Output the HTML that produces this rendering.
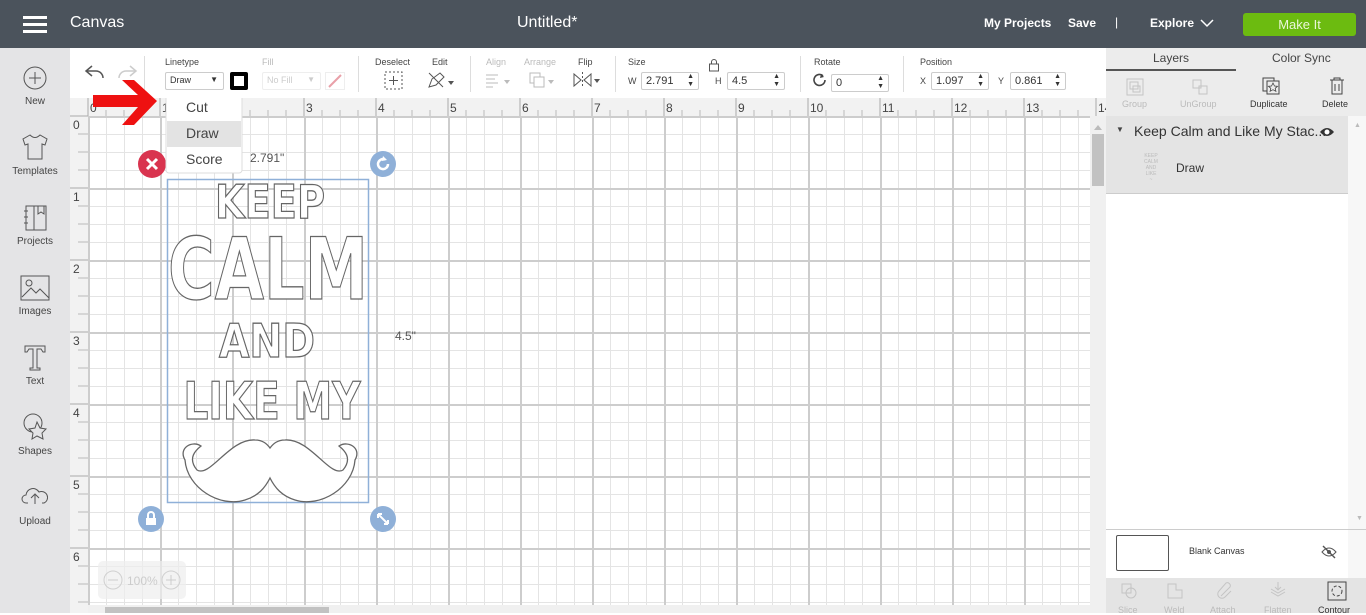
<!DOCTYPE html>
<html><head><meta charset="utf-8">
<style>
*{box-sizing:border-box;margin:0;padding:0}
body{width:1366px;height:613px;overflow:hidden;font-family:"Liberation Sans",sans-serif;background:#fff;position:relative;color:#333}
.abs{position:absolute}
#top{left:0;top:0;width:1366px;height:48px;background:#4b535c;color:#fff}
#side{left:0;top:48px;width:70px;height:565px;background:#e4e4e6}
.si{position:absolute;left:0;width:70px;text-align:center;font-size:10px;color:#444}
#tb{left:70px;top:48px;width:1036px;height:50px;background:#fff}
.lbl{position:absolute;font-size:9px;color:#444}
.dis{color:#bbb}
.inp{position:absolute;height:18px;border:1px solid #ccc;border-radius:2px;font-size:11px;padding:2px 4px;color:#333;background:#fff}
.sep{position:absolute;top:8px;width:1px;height:36px;background:#ddd}
#grid{left:70px;top:98px;width:1036px;height:515px;background:#fff;overflow:hidden}
#rp{left:1106px;top:48px;width:260px;height:565px;background:#fff}
</style></head><body>

<div id="top" class="abs">
  <div class="abs" style="left:23px;top:16px;width:24px;height:3px;background:#fff"></div>
  <div class="abs" style="left:23px;top:23px;width:24px;height:3px;background:#fff"></div>
  <div class="abs" style="left:23px;top:30px;width:24px;height:3px;background:#fff"></div>
  <div class="abs" style="left:70px;top:14px;font-size:16px">Canvas</div>
  <div class="abs" style="left:517px;top:14px;font-size:16px">Untitled*</div>
  <div class="abs" style="left:984px;top:16px;font-size:12px;font-weight:bold">My Projects</div>
  <div class="abs" style="left:1068px;top:16px;font-size:12px;font-weight:bold">Save</div>
  <div class="abs" style="left:1115px;top:15px;font-size:12px">|</div>
  <div class="abs" style="left:1150px;top:16px;font-size:12px;font-weight:bold">Explore</div>
  <svg class="abs" style="left:1200px;top:18px" width="14" height="10"><path d="M1 2l6 6 6-6" stroke="#fff" stroke-width="1.5" fill="none"/></svg>
  <div class="abs" style="left:1243px;top:13px;width:113px;height:23px;background:#6cbb10;border-radius:3px;text-align:center;line-height:23px;font-size:13px;color:#eaf6d8">Make It</div>
</div>

<div id="side" class="abs">
  <svg class="abs" style="left:23px;top:18px" width="24" height="24"><circle cx="12" cy="12" r="11" stroke="#555" fill="none"/><path d="M12 6v12M6 12h12" stroke="#555"/></svg>
  <div class="si" style="top:48px">New</div>
  <svg class="abs" style="left:20px;top:85px" width="30" height="28"><path d="M10 2 L3 6 L5 12 L8 11 L8 26 L22 26 L22 11 L25 12 L27 6 L20 2 Q15 7 10 2Z" stroke="#555" fill="none"/></svg>
  <div class="si" style="top:118px">Templates</div>
  <svg class="abs" style="left:24px;top:156px" width="24" height="28"><rect x="2" y="2" width="20" height="24" stroke="#555" fill="none"/><path d="M10 2v24M14 2v8l3-2 3 2V2M0 7h4M0 13h4M0 19h4" stroke="#555" fill="none"/></svg>
  <div class="si" style="top:188px">Projects</div>
  <svg class="abs" style="left:20px;top:227px" width="30" height="26"><rect x="1" y="1" width="28" height="24" stroke="#555" fill="none"/><circle cx="9" cy="8" r="3" stroke="#555" fill="none"/><path d="M2 22l9-9 5 5 4-4 9 9" stroke="#555" fill="none"/></svg>
  <div class="si" style="top:258px">Images</div>
  <svg class="abs" style="left:23px;top:296px" width="24" height="28"><path d="M2 2h20v6h-2l-2-3h-4v19h3v2H7v-2h3V5H6L4 8H2Z" stroke="#555" fill="none"/></svg>
  <div class="si" style="top:328px">Text</div>
  <svg class="abs" style="left:22px;top:364px" width="26" height="28"><circle cx="11" cy="11" r="9" stroke="#555" fill="none"/><path d="M15 10l3 6 6 1-4 4 1 6-6-3-5 3 1-6-4-4 6-1Z" stroke="#555" fill="#e4e4e6"/></svg>
  <div class="si" style="top:398px">Shapes</div>
  <svg class="abs" style="left:21px;top:436px" width="28" height="22"><path d="M7 19H5a4 4 0 0 1 0-8 7 7 0 0 1 13-3 5 5 0 0 1 5 11h-2" stroke="#555" fill="none"/><path d="M14 20v-9M10 14l4-4 4 4" stroke="#555" fill="none"/></svg>
  <div class="si" style="top:468px">Upload</div>
</div>

<div id="tb" class="abs">
  <svg class="abs" style="left:14px;top:16px" width="22" height="16"><path d="M8 2L2 7l6 5M2 7h10a7 7 0 0 1 7 7" stroke="#555" stroke-width="1.5" fill="none"/></svg>
  <svg class="abs" style="left:46px;top:16px" width="22" height="16"><path d="M14 2l6 5-6 5M20 7H10a7 7 0 0 0-7 7" stroke="#ccc" stroke-width="1.5" fill="none"/></svg>
  <div class="sep" style="left:74px"></div>
  <div class="lbl" style="left:95px;top:9px">Linetype</div>
  <div class="inp" style="left:95px;top:24px;width:59px;font-size:9px">Draw<span style="position:absolute;right:5px;font-size:8px">▼</span></div>
  <div class="abs" style="left:160px;top:24px;width:18px;height:18px;background:#000;border-radius:2px"><div style="margin:4px;width:10px;height:10px;background:#fff"></div></div>
  <div class="lbl dis" style="left:192px;top:9px">Fill</div>
  <div class="inp" style="left:192px;top:24px;width:59px;font-size:9px;color:#ccc;border-color:#eee">No Fill<span style="position:absolute;right:5px;font-size:8px">▼</span></div>
  <div class="abs" style="left:255px;top:24px;width:20px;height:18px;border:1px solid #eee"><svg width="18" height="16"><path d="M3 14L15 2" stroke="#e9a0a8" stroke-width="2"/></svg></div>
  <div class="sep" style="left:288px"></div>
  <div class="lbl" style="left:305px;top:9px">Deselect</div>
  <svg class="abs" style="left:314px;top:23px" width="20" height="20"><rect x="1" y="1" width="17" height="17" stroke="#555" stroke-dasharray="2 2" fill="none"/><path d="M9.5 5v9M5 9.5h9" stroke="#555"/></svg>
  <div class="lbl" style="left:362px;top:9px">Edit</div>
  <svg class="abs" style="left:356px;top:22px" width="30" height="20"><path d="M3 17l3-8 8-6 4 4-8 8Z M3 3l14 14" stroke="#555" fill="none"/><path d="M22 11h6l-3 4Z" fill="#555"/></svg>
  <div class="sep" style="left:400px"></div>
  <div class="lbl dis" style="left:416px;top:9px">Align</div>
  <svg class="abs" style="left:414px;top:24px" width="28" height="16"><path d="M2 3h12M2 7h9M2 11h12M2 15h7" stroke="#bbb"/><path d="M20 8h6l-3 4Z" fill="#bbb"/></svg>
  <div class="lbl dis" style="left:454px;top:9px">Arrange</div>
  <svg class="abs" style="left:458px;top:23px" width="28" height="20"><rect x="2" y="2" width="10" height="10" stroke="#bbb" fill="none"/><rect x="6" y="6" width="10" height="10" stroke="#bbb" fill="#fff"/><path d="M20 9h6l-3 4Z" fill="#bbb"/></svg>
  <div class="lbl" style="left:508px;top:9px">Flip</div>
  <svg class="abs" style="left:502px;top:23px" width="30" height="18"><path d="M2 3v12l7-6Z M19 3v12l-7-6Z" stroke="#555" fill="none"/><path d="M10.5 1v16" stroke="#555" stroke-dasharray="2 2"/><path d="M22 8h6l-3 4Z" fill="#555"/></svg>
  <div class="sep" style="left:545px"></div>
  <div class="lbl" style="left:558px;top:9px">Size</div>
  <div class="lbl" style="left:558px;top:28px">W</div>
  <div class="inp" style="left:571px;top:24px;width:58px">2.791<span style="position:absolute;right:4px;top:0;font-size:7px;line-height:8px">▲<br>▼</span></div>
  <svg class="abs" style="left:638px;top:11px" width="12" height="13"><rect x="1.5" y="5" width="9" height="7" stroke="#555" fill="none"/><path d="M3.5 5V3a2.5 2.5 0 0 1 5 0v2" stroke="#555" fill="none"/></svg>
  <div class="lbl" style="left:645px;top:28px">H</div>
  <div class="inp" style="left:657px;top:24px;width:58px">4.5<span style="position:absolute;right:4px;top:0;font-size:7px;line-height:8px">▲<br>▼</span></div>
  <div class="sep" style="left:730px"></div>
  <div class="lbl" style="left:744px;top:9px">Rotate</div>
  <svg class="abs" style="left:742px;top:24px" width="16" height="16"><path d="M13 8a5.5 5.5 0 1 1-2-4.3" stroke="#444" stroke-width="1.6" fill="none"/><path d="M9 2l3 3-4 1Z" fill="#444"/></svg>
  <div class="inp" style="left:761px;top:26px;width:58px">0<span style="position:absolute;right:4px;top:0;font-size:7px;line-height:8px">▲<br>▼</span></div>
  <div class="sep" style="left:833px"></div>
  <div class="lbl" style="left:850px;top:9px">Position</div>
  <div class="lbl" style="left:850px;top:28px">X</div>
  <div class="inp" style="left:861px;top:24px;width:58px">1.097<span style="position:absolute;right:4px;top:0;font-size:7px;line-height:8px">▲<br>▼</span></div>
  <div class="lbl" style="left:928px;top:28px">Y</div>
  <div class="inp" style="left:940px;top:24px;width:56px">0.861<span style="position:absolute;right:4px;top:0;font-size:7px;line-height:8px">▲<br>▼</span></div>
</div>

<div id="grid" class="abs">
  <svg width="1036" height="515" style="position:absolute;left:0;top:0">
    <defs>
      <pattern id="mn" x="18" y="18" width="18" height="18" patternUnits="userSpaceOnUse"><path d="M0 0.5H18M0.5 0V18" stroke="#e4e4e4" stroke-width="1"/></pattern>
      <pattern id="mj" x="18" y="18" width="72" height="72" patternUnits="userSpaceOnUse"><path d="M0 1H72M1 0V72" stroke="#cdcdcd" stroke-width="2"/></pattern>
    </defs>
    <rect x="18" y="18" width="1002" height="489" fill="url(#mn)"/>
    <rect x="18" y="18" width="1002" height="489" fill="url(#mj)"/>
    <rect x="0" y="0" width="1036" height="18" fill="#f2f2f2"/>
    <rect x="0" y="0" width="18" height="515" fill="#f2f2f2"/>
    <g stroke="#aaa" stroke-width="1">
      <path d="M18 0V18M90 0V18M162 0V18M234 0V18M306 0V18M378 0V18M450 0V18M522 0V18M594 0V18M666 0V18M738 0V18M810 0V18M882 0V18M954 0V18M1026 0V18"/>
      <path d="M0 18H18M0 90H18M0 162H18M0 234H18M0 306H18M0 378H18M0 450H18"/>
    </g>
    <g stroke="#bbb">
      <path d="M36 12V18M54 12V18M72 12V18M108 12V18M126 12V18M144 12V18M180 12V18M198 12V18M216 12V18M252 12V18M270 12V18M288 12V18M324 12V18M342 12V18M360 12V18M396 12V18M414 12V18M432 12V18M468 12V18M486 12V18M504 12V18M540 12V18M558 12V18M576 12V18M612 12V18M630 12V18M648 12V18M684 12V18M702 12V18M720 12V18M756 12V18M774 12V18M792 12V18M828 12V18M846 12V18M864 12V18M900 12V18M918 12V18M936 12V18M972 12V18M990 12V18M1008 12V18"/>
      <path d="M8 36H18M8 54H18M8 72H18M8 108H18M8 126H18M8 144H18M8 180H18M8 198H18M8 216H18M8 252H18M8 270H18M8 288H18M8 324H18M8 342H18M8 360H18M8 396H18M8 414H18M8 432H18M8 468H18M8 486H18M8 504H18"/>
    </g>
    <g font-family="Liberation Sans" font-size="12" fill="#444">
      <text x="20" y="14">0</text><text x="92" y="14">1</text><text x="164" y="14">2</text><text x="236" y="14">3</text><text x="308" y="14">4</text><text x="380" y="14">5</text><text x="452" y="14">6</text><text x="524" y="14">7</text><text x="596" y="14">8</text><text x="668" y="14">9</text><text x="740" y="14">10</text><text x="812" y="14">11</text><text x="884" y="14">12</text><text x="956" y="14">13</text><text x="1028" y="14">14</text>
      <text x="3" y="31">0</text><text x="3" y="103">1</text><text x="3" y="175">2</text><text x="3" y="247">3</text><text x="3" y="319">4</text><text x="3" y="391">5</text><text x="3" y="463">6</text>
    </g>
    <rect x="1020" y="18" width="16" height="497" fill="#f0f0f0"/>
    <rect x="1022" y="36" width="12" height="52" fill="#c2c2c2"/>
    <path d="M1024 32l4-5 4 5Z" fill="#bbb"/>
    <rect x="18" y="507" width="1002" height="8" fill="#f0f0f0"/>
    <rect x="35" y="509" width="224" height="6" fill="#c2c2c2"/>
    <rect x="28" y="463" width="88" height="38" rx="5" fill="#eeeeee" opacity="0.7"/>
    <circle cx="43" cy="482" r="9" fill="none" stroke="#d0d0d0"/><path d="M38 482h10" stroke="#ccc"/>
    <text x="57" y="487" font-family="Liberation Sans" font-size="12" fill="#ccc">100%</text>
    <circle cx="101" cy="482" r="9" fill="none" stroke="#d0d0d0"/><path d="M96 482h10M101 477v10" stroke="#ccc"/>
    <rect x="97.5" y="81.5" width="201" height="323" fill="none" stroke="#8fb0d8" stroke-width="1.5"/>
    <g font-family="DejaVu Sans" font-weight="bold" fill="#fff" stroke="#666" stroke-width="1.3" text-anchor="middle">
      <text x="200" y="120" font-size="46" textLength="110" lengthAdjust="spacingAndGlyphs">KEEP</text>
      <text x="198" y="201" font-size="86" textLength="200" lengthAdjust="spacingAndGlyphs">CALM</text>
      <text x="197" y="259" font-size="46" textLength="96" lengthAdjust="spacingAndGlyphs">AND</text>
      <text x="202" y="321" font-size="52" textLength="177" lengthAdjust="spacingAndGlyphs">LIKE MY</text>
    </g>
    <path d="M115 362 C108 350 122 342 131 348 C126 352 117 360 127 372 C140 380 160 340 185 342 C193 342 197 346 200 350 C203 346 207 342 215 342 C240 340 260 380 273 372 C283 360 274 352 269 348 C278 342 292 350 285 362 C283 390 250 410 225 402 C212 398 205 390 200 380 C195 390 188 398 175 402 C150 410 117 390 115 362Z" fill="#fff" stroke="#666" stroke-width="1.3"/>
    <text x="325" y="242" font-family="Liberation Sans" font-size="12" fill="#555">4.5"</text>
    <text x="180" y="64" font-family="Liberation Sans" font-size="12" fill="#555">2.791"</text>
    <circle cx="82" cy="66" r="14" fill="#d9344f"/><path d="M77 61l10 10M87 61l-10 10" stroke="#fff" stroke-width="3"/>
    <circle cx="313" cy="66" r="13" fill="#8fb0d8"/><path d="M318 66a5 5 0 1 1-3-4.5" stroke="#fff" stroke-width="2.5" fill="none"/><path d="M313 58l4 4-5 1Z" fill="#fff"/>
    <circle cx="81" cy="421" r="13" fill="#8fb0d8"/><rect x="76" y="420" width="10" height="7" fill="#fff"/><path d="M78 420v-3a3 3 0 0 1 6 0v3" stroke="#fff" stroke-width="2" fill="none"/>
    <circle cx="313" cy="421" r="13" fill="#8fb0d8"/><path d="M308 416l10 10M308 416h4M308 416v4M318 426h-4M318 426v-4" stroke="#fff" stroke-width="2"/>
    <rect x="96" y="-3" width="76" height="78" rx="3" fill="#fff" stroke="#ddd"/>
    <rect x="97" y="23" width="74" height="26" fill="#e3e3e3"/>
    <g font-family="Liberation Sans" font-size="14" fill="#444"><text x="116" y="14">Cut</text><text x="116" y="40">Draw</text><text x="116" y="66">Score</text></g>
  </svg>
</div>

<svg class="abs" style="left:0;top:0" width="200" height="140">
  <path d="M93 95 H138 L122 80 H134 L157 101 L134 125 H122 L138 107 H93 Z" fill="#ee1111"/>
</svg>

<div id="rp" class="abs">
  <div class="abs" style="left:0;top:0;width:260px;height:68px;background:#ececec"></div>
  <div class="abs" style="left:47px;top:3px;font-size:12px;color:#444">Layers</div>
  <div class="abs" style="left:166px;top:3px;font-size:12px;color:#444">Color Sync</div>
  <div class="abs" style="left:0;top:21px;width:130px;height:2px;background:#555"></div>
  <svg class="abs" style="left:19px;top:29px" width="20" height="20"><rect x="2" y="2" width="16" height="16" stroke="#c4c4c4" fill="none"/><rect x="5" y="5" width="8" height="7" stroke="#c4c4c4" fill="none"/><rect x="8" y="9" width="7" height="6" stroke="#c4c4c4" fill="none"/></svg>
  <div class="abs" style="left:16px;top:51px;font-size:9px;color:#bbb">Group</div>
  <svg class="abs" style="left:84px;top:29px" width="20" height="20"><rect x="3" y="3" width="8" height="8" stroke="#c4c4c4" fill="none"/><rect x="9" y="9" width="8" height="8" stroke="#c4c4c4" fill="none"/></svg>
  <div class="abs" style="left:74px;top:51px;font-size:9px;color:#bbb">UnGroup</div>
  <svg class="abs" style="left:155px;top:28px" width="20" height="20"><rect x="2" y="2" width="11" height="13" stroke="#444" fill="none"/><rect x="6" y="5" width="12" height="13" stroke="#444" fill="#ececec"/><path d="M12 7l1.5 3 3 .3-2.3 2 .7 3-2.9-1.6-2.9 1.6.7-3-2.3-2 3-.3Z" stroke="#444" fill="none" stroke-width=".8"/></svg>
  <div class="abs" style="left:144px;top:51px;font-size:9px;color:#333">Duplicate</div>
  <svg class="abs" style="left:222px;top:28px" width="18" height="20"><path d="M2 4h14M6 4V2h6v2M4 4v14h10V4M7 8v7M11 8v7" stroke="#444" fill="none"/></svg>
  <div class="abs" style="left:216px;top:51px;font-size:9px;color:#333">Delete</div>
  <div class="abs" style="left:0;top:68px;width:242px;height:78px;background:#e4e4e4;border-bottom:1px solid #ccc"></div>
  <div class="abs" style="left:242px;top:68px;width:18px;height:462px;background:#f7f7f7"></div>
  <div class="abs" style="left:248px;top:74px;font-size:7px;color:#bbb">▲</div>
  <div class="abs" style="left:250px;top:467px;font-size:7px;color:#bbb">▼</div>
  <div class="abs" style="left:10px;top:77px;font-size:8px;color:#444">▼</div>
  <div class="abs" style="left:28px;top:75px;font-size:14px;color:#333">Keep Calm and Like My Stac...</div>
  <svg class="abs" style="left:213px;top:78px" width="16" height="12"><path d="M1 6Q8-2 15 6Q8 14 1 6Z" fill="#333"/><circle cx="8" cy="6" r="2.5" fill="#fff"/></svg>
  <div class="abs" style="left:37px;top:105px;width:16px;height:30px;font-size:5px;color:#bbb;line-height:6px;text-align:center">KEEP<br>CALM<br>AND<br>LIKE<br>~</div>
  <div class="abs" style="left:70px;top:113px;font-size:12px;color:#333">Draw</div>
  <div class="abs" style="left:0;top:481px;width:260px;height:1px;background:#ccc"></div>
  <div class="abs" style="left:10px;top:487px;width:53px;height:36px;border:1px solid #555;border-radius:2px;background:#fff"></div>
  <div class="abs" style="left:83px;top:498px;font-size:9px;color:#333">Blank Canvas</div>
  <svg class="abs" style="left:215px;top:497px" width="16" height="14"><path d="M1 7Q8-1 15 7Q8 15 1 7Z" fill="none" stroke="#555"/><circle cx="8" cy="7" r="2" fill="#555"/><path d="M2 1l12 12" stroke="#555" stroke-width="1.4"/></svg>
  <div class="abs" style="left:0;top:530px;width:260px;height:35px;background:#e4e4e4"></div>
  <svg class="abs" style="left:14px;top:534px" width="18" height="18"><rect x="2" y="2" width="9" height="9" stroke="#c4c4c4" fill="none"/><circle cx="11" cy="11" r="5" stroke="#c4c4c4" fill="none"/></svg>
  <div class="abs" style="left:12px;top:557px;font-size:9px;color:#bbb">Slice</div>
  <svg class="abs" style="left:60px;top:534px" width="18" height="18"><path d="M2 2h8v6h6v8H2Z" stroke="#c4c4c4" fill="none"/></svg>
  <div class="abs" style="left:58px;top:557px;font-size:9px;color:#bbb">Weld</div>
  <svg class="abs" style="left:110px;top:534px" width="18" height="18"><path d="M5 14L14 5a3 3 0 0 0-4-4L3 9a4 4 0 0 0 6 6l6-6" stroke="#c4c4c4" fill="none"/></svg>
  <div class="abs" style="left:104px;top:557px;font-size:9px;color:#bbb">Attach</div>
  <svg class="abs" style="left:163px;top:533px" width="18" height="18"><path d="M2 11l7 4 7-4M2 8l7 4 7-4M9 1v8M6 6l3 3 3-3" stroke="#c4c4c4" fill="none"/></svg>
  <div class="abs" style="left:158px;top:557px;font-size:9px;color:#bbb">Flatten</div>
  <svg class="abs" style="left:221px;top:533px" width="20" height="20"><rect x="1" y="1" width="18" height="18" stroke="#444" fill="none"/><circle cx="10" cy="10" r="5" stroke="#444" fill="none" stroke-dasharray="3 2"/></svg>
  <div class="abs" style="left:212px;top:557px;font-size:9px;color:#333">Contour</div>
</div>
</body></html>
